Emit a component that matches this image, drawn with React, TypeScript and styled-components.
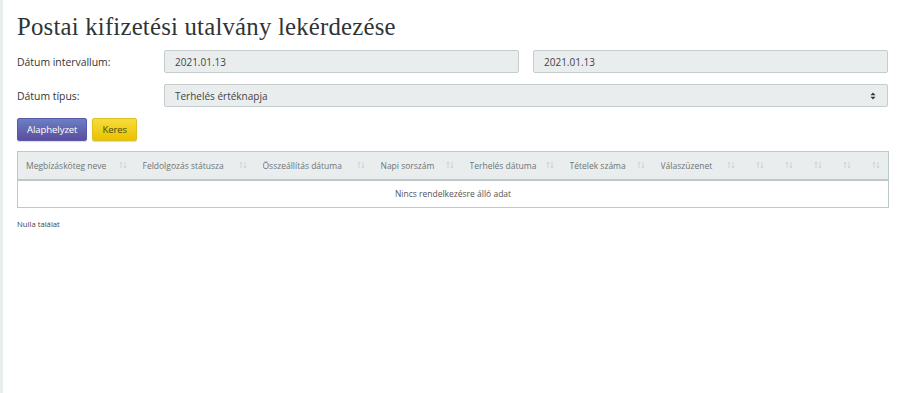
import React from "react";
import styled, { createGlobalStyle } from "styled-components";

const Global = createGlobalStyle`
  html, body { margin: 0; padding: 0; background: #fff; }
  body { font-family: "Open Sans", "Liberation Sans", sans-serif; color: #333; }
  * { box-sizing: border-box; }
`;

const Page = styled.div`
  min-height: 393px;
  border-left: 3px solid #e9eded;
  padding: 12px 12px 0 14px;
`;

const Title = styled.h1`
  margin: 0 0 8px 0;
  font-family: "Liberation Serif", "DejaVu Serif", serif;
  font-weight: 400;
  font-size: 24.8px;
  line-height: 30px;
  color: #2f3436;
  letter-spacing: 0.2px;
`;

const FormRow = styled.div`
  display: grid;
  grid-template-columns: 147px 1fr;
  align-items: center;
  margin-bottom: 11px;
`;

const Label = styled.div`
  font-size: 10.4px;
  color: #333;
`;

const Fields = styled.div<{ $cols: number }>`
  display: grid;
  grid-template-columns: repeat(${(p) => p.$cols}, 1fr);
  gap: 14px;
`;

const Field = styled.div`
  height: 23px;
  background: #e9eded;
  border: 1px solid #c4cccc;
  border-radius: 2px;
  display: flex;
  align-items: center;
  justify-content: space-between;
  padding: 0 10px;
  font-size: 10px;
  color: #444;
`;

const Arrows = styled.svg`
  width: 6px;
  height: 8px;
  margin-right: 1px;
`;

const Buttons = styled.div`
  display: flex;
  gap: 5px;
  margin-bottom: 10px;
`;

const Button = styled.button<{ $variant: "primary" | "warning" }>`
  height: 23px;
  padding: 0 9px;
  border-radius: 2px;
  font-family: "Open Sans", "Liberation Sans", sans-serif;
  font-size: 9.6px;
  letter-spacing: -0.1px;
  cursor: pointer;
  border: 1px solid
    ${(p) => (p.$variant === "primary" ? "#5a5aa8" : "#e0c020")};
  background: ${(p) =>
    p.$variant === "primary"
      ? "linear-gradient(#6a7fc4, #5b4d9f)"
      : "linear-gradient(#f7dc3c, #e9c300)"};
  color: ${(p) => (p.$variant === "primary" ? "#fff" : "#4a4a10")};
  box-shadow: 0 1px 1px rgba(0, 0, 0, 0.15);
`;

const Table = styled.table`
  width: 871px;
  border-collapse: collapse;
  table-layout: fixed;
  border: 1px solid #bfc8c8;
`;

const Th = styled.th`
  background: #e9eded;
  border-bottom: 2px solid #bfc8c8;
  height: 28px;
  padding: 0 8px 0 8px;
  font-weight: 400;
  text-align: left;
  font-size: 8.5px;
  color: #707575;
  white-space: nowrap;
`;

const ThInner = styled.div`
  display: flex;
  justify-content: space-between;
  align-items: center;
  overflow: hidden;
`;

const SortIcon = styled.svg`
  width: 8px;
  height: 8px;
  flex: none;
`;

const EmptyCell = styled.td`
  height: 28px;
  text-align: center;
  font-size: 8.5px;
  color: #555;
`;

const Footer = styled.div`
  margin-top: 11px;
  font-size: 7.7px;
  color: #444;
`;

const Sort = () => (
  <SortIcon viewBox="0 0 8 8">
    <path d="M2 7V1.2M0.8 2.4L2 1.1L3.2 2.4" stroke="#c7cccc" strokeWidth="0.8" fill="none" />
    <path d="M6 1V6.8M4.8 5.6L6 6.9L7.2 5.6" stroke="#c7cccc" strokeWidth="0.8" fill="none" />
  </SortIcon>
);

const columns: { title: string; width: number }[] = [
  { title: "Megbízásköteg neve", width: 117 },
  { title: "Feldolgozás státusza", width: 120 },
  { title: "Összeállítás dátuma", width: 118 },
  { title: "Napi sorszám", width: 89 },
  { title: "Terhelés dátuma", width: 100 },
  { title: "Tételek száma", width: 91 },
  { title: "Válaszüzenet", width: 90 },
  { title: "", width: 29 },
  { title: "", width: 29 },
  { title: "", width: 29 },
  { title: "", width: 29 },
  { title: "", width: 30 },
];

export default function App() {
  return (
    <>
      <Global />
      <Page>
        <Title>Postai kifizetési utalvány lekérdezése</Title>
        <FormRow>
          <Label>Dátum intervallum:</Label>
          <Fields $cols={2}>
            <Field>2021.01.13</Field>
            <Field>2021.01.13</Field>
          </Fields>
        </FormRow>
        <FormRow>
          <Label>Dátum típus:</Label>
          <Fields $cols={1}>
            <Field>
              Terhelés értéknapja
              <Arrows viewBox="0 0 6 8">
                <path d="M3 0.5L5.5 3.3H0.5Z" fill="#333" />
                <path d="M3 7.5L5.5 4.7H0.5Z" fill="#333" />
              </Arrows>
            </Field>
          </Fields>
        </FormRow>
        <Buttons>
          <Button $variant="primary">Alaphelyzet</Button>
          <Button $variant="warning">Keres</Button>
        </Buttons>
        <Table>
          <colgroup>
            {columns.map((c, i) => (
              <col key={i} style={{ width: c.width }} />
            ))}
          </colgroup>
          <thead>
            <tr>
              {columns.map((c, i) => (
                <Th key={i}>
                  <ThInner>
                    <span>{c.title}</span>
                    <Sort />
                  </ThInner>
                </Th>
              ))}
            </tr>
          </thead>
          <tbody>
            <tr>
              <EmptyCell colSpan={columns.length}>Nincs rendelkezésre álló adat</EmptyCell>
            </tr>
          </tbody>
        </Table>
        <Footer>Nulla találat</Footer>
      </Page>
    </>
  );
}
